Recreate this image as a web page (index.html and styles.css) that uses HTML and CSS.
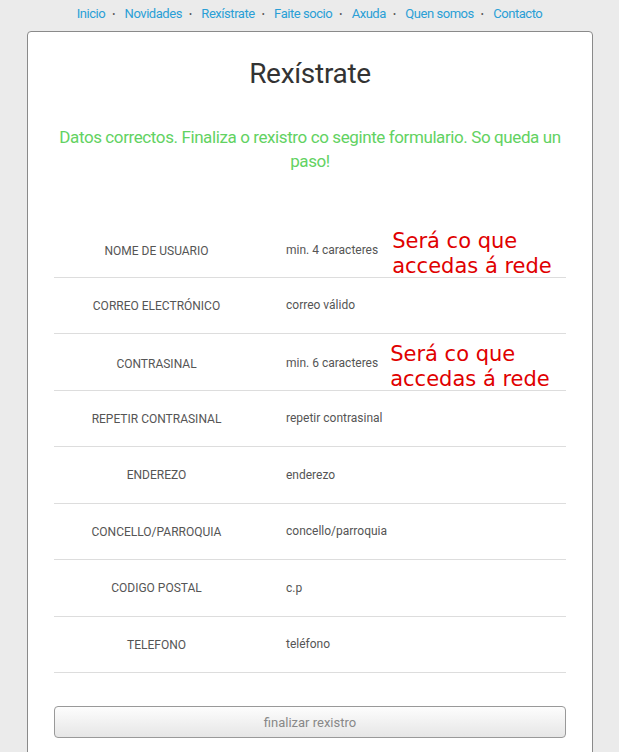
FILE: index.html
```html
<!DOCTYPE html>
<html lang="gl">
<head>
<meta charset="utf-8">
<title>Rexístrate</title>
<link rel="stylesheet" href="styles.css">
</head>
<body>
<nav class="topnav">
  <a href="#">Inicio</a><span class="dot">•</span>
  <a href="#">Novidades</a><span class="dot">•</span>
  <a href="#">Rexístrate</a><span class="dot">•</span>
  <a href="#">Faite socio</a><span class="dot">•</span>
  <a href="#">Axuda</a><span class="dot">•</span>
  <a href="#">Quen somos</a><span class="dot">•</span>
  <a href="#">Contacto</a>
</nav>
<main class="card">
  <h1 class="title">Rexístrate</h1>
  <p class="ok">Datos correctos. Finaliza o rexistro co seginte formulario. So queda un paso!</p>
  <div class="form">
    <div class="row"><div class="label">NOME DE USUARIO</div><div class="value"><span class="ph">min. 4 caracteres</span><span class="note">Será co que<br>accedas á rede</span></div></div>
    <div class="row"><div class="label">CORREO ELECTRÓNICO</div><div class="value"><span class="ph">correo válido</span></div></div>
    <div class="row"><div class="label">CONTRASINAL</div><div class="value"><span class="ph">min. 6 caracteres</span><span class="note note2">Será co que<br>accedas á rede</span></div></div>
    <div class="row"><div class="label">REPETIR CONTRASINAL</div><div class="value"><span class="ph">repetir contrasinal</span></div></div>
    <div class="row"><div class="label">ENDEREZO</div><div class="value"><span class="ph">enderezo</span></div></div>
    <div class="row"><div class="label">CONCELLO/PARROQUIA</div><div class="value"><span class="ph">concello/parroquia</span></div></div>
    <div class="row"><div class="label">CODIGO POSTAL</div><div class="value"><span class="ph">c.p</span></div></div>
    <div class="row"><div class="label">TELEFONO</div><div class="value"><span class="ph">teléfono</span></div></div>
  </div>
  <button class="submit" type="button">finalizar rexistro</button>
</main>
</body>
</html>
```
FILE: styles.css
```css
html, body {
  margin: 0;
  padding: 0;
}
body {
  background: #ebebeb;
  font-family: Roboto, "Liberation Sans", sans-serif;
  height: 752px;
  overflow: hidden;
}
.topnav {
  height: 31px;
  box-sizing: border-box;
  padding-top: 5px;
  text-align: center;
  font-size: 13px;
  line-height: 18px;
  letter-spacing: -0.45px;
}
.topnav a {
  color: #2a9fd6;
  text-decoration: none;
}
.topnav .dot {
  color: #555;
  font-size: 9px;
  margin: 0 7px;
  vertical-align: 1px;
}
.card {
  margin: 0 26px 0 27px;
  background: #fff;
  border: 1px solid #8a8a8a;
  border-radius: 4px;
  padding: 25px 26px 40px;
  min-height: 760px;
}
.title {
  margin: 0;
  text-align: center;
  font-weight: 400;
  font-size: 28px;
  line-height: 34px;
  letter-spacing: -0.3px;
  color: #333;
}
.ok {
  margin: 34px 0 48px;
  text-align: center;
  font-size: 17px;
  line-height: 24px;
  letter-spacing: -0.4px;
  color: #62d262;
}
.form {
  display: flex;
  flex-direction: column;
}
.row {
  display: grid;
  grid-template-columns: 205px 1fr;
  height: 56.5px;
  box-sizing: border-box;
  border-bottom: 1px solid #ddd;
  align-items: center;
  font-size: 12px;
  color: #555;
}
.label {
  text-align: center;
  padding-top: 1px;
}
.value {
  display: flex;
  align-items: center;
  padding-left: 27px;
}
.note {
  margin-left: 14px;
  font-family: "DejaVu Sans", sans-serif;
  font-size: 21px;
  line-height: 25px;
  color: #e00000;
  padding-top: 8px;
}
.note2 {
  margin-left: 12px;
}
.submit {
  display: block;
  width: 100%;
  margin-top: 33px;
  height: 32px;
  border: 1px solid #999;
  border-radius: 4px;
  background: linear-gradient(#fdfdfd, #e6e6e6);
  color: #888;
  font-family: Roboto, "Liberation Sans", sans-serif;
  font-size: 13px;
}
```
